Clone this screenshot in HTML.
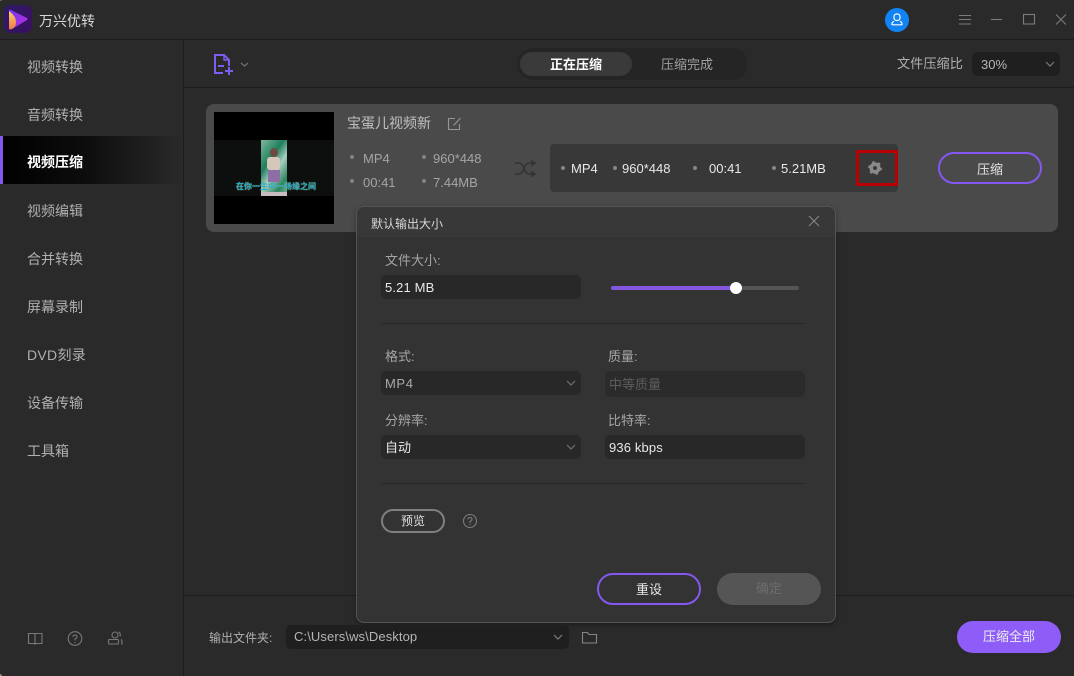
<!DOCTYPE html>
<html lang="zh"><head><meta charset="utf-8"><title>万兴优转</title>
<style>
*{box-sizing:border-box;margin:0;padding:0}
html,body{width:1074px;height:676px;overflow:hidden;background:#2a2a2a}
body{position:relative;font:13px "Liberation Sans","Noto Sans CJK SC",sans-serif;color:#bbb}
.a{position:absolute;white-space:nowrap}
.nav{position:absolute;left:27px;font-size:14px;line-height:20px;color:#b0b0b0}
.d{position:absolute;width:4px;height:4px;border-radius:50%;background:#858585}
.l{position:absolute;color:#a5a5a5;font-size:13px;line-height:18px;white-space:nowrap}
.w{position:absolute;color:#e8e8e8;font-size:13px;line-height:18px;white-space:nowrap}
.box{position:absolute;background:#282828;border-radius:5px;color:#e8e8e8;font-size:13px;line-height:26px;padding-left:4px;height:24px;width:200px;letter-spacing:.15px}
svg{position:absolute;overflow:visible}
</style></head><body>
<div class="a" style="left:0;top:39px;width:1074px;height:1px;background:#1d1d1d"></div>
<div class="a" style="left:183px;top:40px;width:1px;height:636px;background:#1d1d1d"></div>
<div class="a" style="left:184px;top:87px;width:890px;height:1px;background:#1d1d1d"></div>
<div class="a" style="left:184px;top:595px;width:890px;height:1px;background:#1d1d1d"></div>
<div class="a" style="left:0;top:0;width:2px;height:1px;background:#6a5a40"></div>
<div class="a" style="left:0;top:674px;width:2px;height:2px;background:#a08560;border-radius:0 2px 0 0"></div>

<!-- logo -->
<div class="a" style="left:4px;top:5px;width:28px;height:28px;border-radius:7px;background:linear-gradient(135deg,#2e1a66,#3a1060)"></div>
<svg style="left:4px;top:5px" width="28" height="28"><defs><linearGradient id="g1" x1="0" y1="0" x2="0" y2="1"><stop offset="0" stop-color="#ffd070"/><stop offset="1" stop-color="#f07a40"/></linearGradient><linearGradient id="g2" x1="0" y1="0" x2="1" y2="1"><stop offset="0" stop-color="#6a3cf0"/><stop offset="1" stop-color="#c02ce0"/></linearGradient></defs><path d="M5 5 Q5 4 7 5 L23 13 Q24 14 23 15 L8 24 Q5 25 5 23Z" fill="url(#g2)"/><path d="M5 6 Q12 11 12 17 Q12 22 8 24 Q5 25 5 23Z" fill="url(#g1)"/></svg>
<div class="a" style="left:39px;top:11px;font-size:14px;line-height:20px;color:#d8d8d8">万兴优转</div>

<!-- window controls -->
<div class="a" style="left:885px;top:8px;width:24px;height:24px;border-radius:50%;background:#1283f5"></div>
<svg style="left:885px;top:8px" width="24" height="24" fill="none" stroke="#fff" stroke-width="1.200"><rect x="9" y="6" width="6" height="6.500" rx="2.600"/><path d="M7 17v-1q0-2 2-2.500M17 17v-1q0-2-2-2.500M7 16.800h10"/></svg>
<svg style="left:958px;top:13px" width="110" height="14" fill="none" stroke="#7c7c7c" stroke-width="1.100"><path d="M1 2.500h12M1 6.500h12M1 11h12"/><path d="M33 6.500h11"/><rect x="65.500" y="1.500" width="11" height="9.500"/><path d="M98 1.500l10 10M108 1.500l-10 10"/></svg>

<!-- sidebar -->
<div class="a" style="left:0;top:136px;width:183px;height:48px;background:linear-gradient(90deg,#000 0%,#0c0c0c 45%,#2a2a2a 100%)"></div>
<div class="a" style="left:0;top:136px;width:3px;height:48px;background:#8458f0"></div>
<div class="nav" style="top:57px">视频转换</div>
<div class="nav" style="top:105px">音频转换</div>
<div class="nav" style="top:152px;color:#fff;font-weight:bold">视频压缩</div>
<div class="nav" style="top:201px">视频编辑</div>
<div class="nav" style="top:249px">合并转换</div>
<div class="nav" style="top:297px">屏幕录制</div>
<div class="nav" style="top:345px;letter-spacing:.3px">DVD刻录</div>
<div class="nav" style="top:393px">设备传输</div>
<div class="nav" style="top:441px">工具箱</div>
<svg style="left:28px;top:632px" width="100" height="14" fill="none" stroke="#787878" stroke-width="1.100"><path d="M.5 1.500h6.500v10H.5zM7 1.500h7v10H7zM7 11.500v1.500"/><circle cx="47" cy="6.500" r="6.800"/><path d="M45 5q0-2 2-2t2 2q0 1-2 2v1.500M47 10v1"/><rect x="80.500" y="7.500" width="10" height="4.500" rx="1"/><circle cx="87" cy="3" r="3"/><path d="M90.500 0q2.500 1 1.500 4.500M93 7.500q1 .5 1 2.500v2h-1"/></svg>

<!-- toolbar -->
<svg style="left:214px;top:54px" width="36" height="22" fill="none" stroke="#7d5cf2" stroke-width="2"><path d="M9 19H1V1h9l5 5v6"/><path d="M10 1v5h5" stroke-width="1.400"/><path d="M4 12h6"/><path d="M15 13v8M11 17h8"/><path d="M27 9l3.500 3 3.500-3" stroke="#6e6e6e" stroke-width="1.300"/></svg>
<div class="a" style="left:517px;top:48px;width:231px;height:32px;border-radius:16px;background:#252525"></div>
<div class="a" style="left:520px;top:52px;width:112px;height:24px;border-radius:12px;background:#3a3a3a;color:#fff;font-weight:bold;font-size:13px;line-height:25px;text-align:center">正在压缩</div>
<div class="a" style="left:632px;top:52px;width:110px;line-height:25px;text-align:center;color:#a0a0a0;font-size:13px">压缩完成</div>
<div class="a" style="left:897px;top:55px;font-size:13.200px;line-height:18px;color:#b0b0b0">文件压缩比</div>
<div class="a" style="left:972px;top:52px;width:88px;height:24px;background:#1f1f1f;border-radius:5px;color:#b5b5b5;line-height:25px;padding-left:9px">30%</div>
<svg style="left:1045px;top:61px" width="11" height="7" fill="none" stroke="#7c7c7c" stroke-width="1.200"><path d="M1 1l4 4 4-4"/></svg>

<!-- card -->
<div class="a" style="left:206px;top:104px;width:852px;height:128px;border-radius:8px;background:#4a4a4a"></div>
<div class="a" style="left:214px;top:112px;width:120px;height:112px;background:#000"></div>
<div class="a" style="left:214px;top:140px;width:120px;height:56px;background:#0c0f0e"></div>
<div class="a" style="left:261px;top:140px;width:26px;height:56px;background:linear-gradient(125deg,#7fb8a0,#1f7f5c 35%,#a7cfc0 55%,#2d8560 80%,#7fb8a0)"></div>
<div class="a" style="left:270px;top:148px;width:8px;height:9px;border-radius:50%;background:#6e4a40"></div>
<div class="a" style="left:267px;top:157px;width:13px;height:13px;background:#d5c8ba;border-radius:3px"></div>
<div class="a" style="left:268px;top:170px;width:12px;height:12px;background:#8e6ea6"></div>
<div class="a" style="left:261px;top:192px;width:26px;height:4px;background:#c8bcc0"></div>
<div class="a" style="left:236px;top:181px;width:77px;font-size:8px;line-height:12px;color:#22a6dc;font-weight:bold;text-shadow:0 0 1px #b8d050">在你一生中一场缘之间</div>

<div class="a" style="left:347px;top:113px;font-size:14px;line-height:20px;color:#c0c0c0">宝蛋儿视频新</div>
<svg style="left:448px;top:117px" width="14" height="14" fill="none" stroke="#969696" stroke-width="1.100"><path d="M11.500 7v5.500H.5V1.500H7"/><path d="M5.500 8.500L12.500 1"/></svg>
<div class="d" style="left:350px;top:155px"></div><div class="l" style="left:363px;top:150px">MP4</div>
<div class="d" style="left:422px;top:155px"></div><div class="l" style="left:433px;top:150px">960*448</div>
<div class="d" style="left:350px;top:179px"></div><div class="l" style="left:363px;top:174px">00:41</div>
<div class="d" style="left:422px;top:179px"></div><div class="l" style="left:433px;top:174px">7.44MB</div>
<svg style="left:515px;top:160px" width="21" height="17" fill="none" stroke="#333" stroke-width="1.600"><path d="M0 3h4q3 0 5 5.500t5 5.500h5M0 14h4q3 0 5-5.500T14 3h5"/><path d="M16 .5L20 3l-4 2.500M16 11.500l4 2.500-4 2.500"/></svg>

<div class="a" style="left:550px;top:144px;width:348px;height:48px;border-radius:4px;background:#383838"></div>
<div class="d" style="left:561px;top:166px"></div><div class="w" style="left:571px;top:160px">MP4</div>
<div class="d" style="left:613px;top:166px"></div><div class="w" style="left:622px;top:160px">960*448</div>
<div class="d" style="left:693px;top:166px"></div><div class="w" style="left:709px;top:160px">00:41</div>
<div class="d" style="left:772px;top:166px"></div><div class="w" style="left:781px;top:160px">5.21MB</div>
<div class="a" style="left:856px;top:150px;width:42px;height:36px;border:3px solid #b80000"></div>
<svg style="left:867px;top:160px" width="16" height="16" fill="none" stroke="#8a8a8a"><circle cx="8" cy="8" r="3.800" stroke-width="3.600"/><circle cx="8" cy="8" r="6" stroke-width="1.800" stroke-dasharray="2.500 3.780"/></svg>
<div class="a" style="left:938px;top:152px;width:104px;height:32px;border:2px solid #8458f0;border-radius:16px;text-align:center;line-height:31px;color:#e4e4e4;font-size:13px">压缩</div>

<!-- dialog -->
<div class="a" style="left:356px;top:206px;width:480px;height:417px;background:#333;border:1px solid #555;border-radius:8px;box-shadow:0 2px 6px rgba(0,0,0,.3)"></div>
<div class="a" style="left:357px;top:207px;width:478px;height:30px;background:#383838;border-radius:7px 7px 0 0"></div>
<div class="a" style="left:371px;top:214px;font-size:12px;line-height:20px;color:#d8d8d8">默认输出大小</div>
<svg style="left:808px;top:215px" width="12" height="12" fill="none" stroke="#858585" stroke-width="1.100"><path d="M1 1l10 10M11 1L1 11"/></svg>

<div class="l" style="left:385px;top:252px">文件大小:</div>
<div class="box" style="left:381px;top:275px">5.21 MB</div>
<div class="a" style="left:611px;top:286px;width:188px;height:4px;border-radius:2px;background:#555"></div>
<div class="a" style="left:611px;top:286px;width:125px;height:4px;border-radius:2px;background:#8458e0"></div>
<div class="a" style="left:730px;top:282px;width:12px;height:12px;border-radius:50%;background:#fff"></div>
<div class="a" style="left:381px;top:323px;width:424px;height:1px;background:#262626"></div>

<div class="l" style="left:385px;top:348px">格式:</div>
<div class="box" style="left:381px;top:371px;color:#aaa;letter-spacing:.6px">MP4</div>
<svg style="left:566px;top:380px" width="10" height="6" fill="none" stroke="#6e6e6e" stroke-width="1.200"><path d="M1 1l4 4 4-4"/></svg>
<div class="l" style="left:608px;top:348px">质量:</div>
<div class="box" style="left:605px;top:371px;height:26px;line-height:27px;color:#5c5c5c;background:#2b2b2b;letter-spacing:0">中等质量</div>
<div class="l" style="left:385px;top:412px">分辨率:</div>
<div class="box" style="left:381px;top:435px;letter-spacing:0">自动</div>
<svg style="left:566px;top:444px" width="10" height="6" fill="none" stroke="#6e6e6e" stroke-width="1.200"><path d="M1 1l4 4 4-4"/></svg>
<div class="l" style="left:608px;top:412px">比特率:</div>
<div class="box" style="left:605px;top:435px">936 kbps</div>
<div class="a" style="left:381px;top:483px;width:424px;height:1px;background:#262626"></div>

<div class="a" style="left:381px;top:509px;width:64px;height:24px;border:2px solid #808080;border-radius:12px;text-align:center;line-height:21px;color:#e0e0e0;font-size:12px">预览</div>
<svg style="left:463px;top:514px" width="14" height="14" fill="none" stroke="#7c7c7c" stroke-width="1.100"><circle cx="7" cy="7" r="6.500"/><path d="M5 5.500q0-2 2-2t2 2q0 1-2 2V9M7 10v1"/></svg>
<div class="a" style="left:597px;top:573px;width:104px;height:32px;border:2px solid #8458f0;border-radius:16px;text-align:center;line-height:29px;color:#e8e8e8;font-size:13px">重设</div>
<div class="a" style="left:717px;top:573px;width:104px;height:32px;border-radius:16px;background:#555;text-align:center;line-height:32px;color:#6c6c6c;font-size:13px">确定</div>

<!-- footer -->
<div class="a" style="left:209px;top:629px;font-size:12px;line-height:18px;color:#b0b0b0">输出文件夹:</div>
<div class="a" style="left:286px;top:625px;width:283px;height:24px;border-radius:5px;background:#1f1f1f;color:#b5b5b5;line-height:24px;padding-left:8px;font-size:13px;letter-spacing:.1px">C:\Users\ws\Desktop</div>
<svg style="left:553px;top:634px" width="10" height="6" fill="none" stroke="#7c7c7c" stroke-width="1.200"><path d="M1 1l4 4 4-4"/></svg>
<svg style="left:582px;top:631px" width="15" height="13" fill="none" stroke="#858585" stroke-width="1.100"><path d="M.5 12V1.500h5l1.500 2h7.500V12z"/></svg>
<div class="a" style="left:957px;top:621px;width:104px;height:32px;border-radius:16px;background:#8e5cf7;text-align:center;line-height:32px;color:#eee;font-size:13px">压缩全部</div>
</body></html>
